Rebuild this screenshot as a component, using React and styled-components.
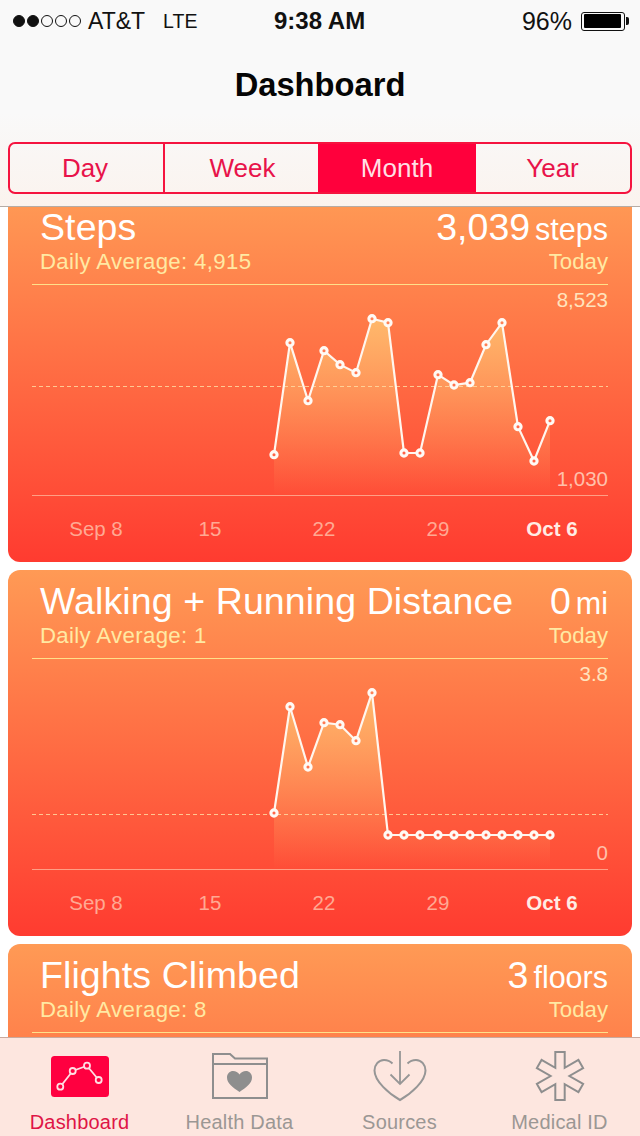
import React from "react";
import styled, { createGlobalStyle } from "styled-components";

const GlobalStyle = createGlobalStyle`
  html, body {
    margin: 0;
    padding: 0;
    background: #fff;
    font-family: "Liberation Sans", Arial, sans-serif;
  }
`;

const xs = [242, 258, 276, 292, 308, 324, 340, 356, 372, 388, 406, 422, 438, 454, 470, 486, 502, 518];

const cards = [
  {
    id: "steps",
    title: "Steps",
    value: "3,039",
    unit: "steps",
    average: "Daily Average: 4,915",
    max: "8,523",
    min: "1,030",
    mid: 101,
    ys: [169.7, 57.7, 115.7, 65.7, 79.7, 87.7, 33.7, 37.7, 168, 168, 89.7, 100, 97.7, 59.7, 37.7, 141.7, 176, 135.7],
  },
  {
    id: "distance",
    title: "Walking + Running Distance",
    value: "0",
    unit: "mi",
    average: "Daily Average: 1",
    max: "3.8",
    min: "0",
    mid: 155,
    ys: [154, 47.7, 108, 63.7, 65.7, 81.7, 33.7, 176, 176, 176, 176, 176, 176, 176, 176, 176, 176, 176],
  },
  {
    id: "flights",
    title: "Flights Climbed",
    value: "3",
    unit: "floors",
    average: "Daily Average: 8",
  },
];

const dates = ["Sep 8", "15", "22", "29", "Oct 6"];

const tabs = [
  { label: "Dashboard", Icon: DashboardIcon, active: true },
  { label: "Health Data", Icon: FolderIcon },
  { label: "Sources", Icon: SourcesIcon },
  { label: "Medical ID", Icon: StarOfLifeIcon },
];

function DashboardIcon() {
  const pts = [[9.3, 30.7], [21.7, 15], [36, 9.7], [47.7, 24]];
  return (
    <svg width="58" height="41" viewBox="0 0 58 41">
      <rect width="58" height="41" rx="3.5" fill="#ff0040" />
      <polyline points={pts.map((p) => p.join(",")).join(" ")} fill="none" stroke="#ffdfe3" strokeWidth="1.8" />
      {pts.map((p) => (
        <circle key={p[0]} cx={p[0]} cy={p[1]} r="3" fill="#ff0040" stroke="#ffdfe3" strokeWidth="1.8" />
      ))}
    </svg>
  );
}

function FolderIcon() {
  return (
    <svg width="56" height="46" viewBox="0 0 56 46">
      <path
        d="M1 45V1H18L23 5.6H55V45ZM1 11H55"
        fill="none"
        stroke="#8e8e8e"
        strokeWidth="2"
      />
      <path
        d="M27.5 39C21 34.5 15 30.5 15 24.5C15 20.5 18 18 21 18C23.8 18 26 19.3 27.5 21.5C29 19.3 31.2 18 34 18C37 18 40 20.5 40 24.5C40 30.5 34 34.5 27.5 39Z"
        fill="#8e8e8e"
      />
    </svg>
  );
}

function SourcesIcon() {
  return (
    <svg width="54" height="52" viewBox="0 0 54 52">
      <path
        d="M19.5 13.5C17 11 14 10 11 10C5.500 10 1.500 15 1.500 20.500C1.500 31 16 44 27 50C38 44 52.500 31 52.500 20.500C52.500 15 48.500 10 43 10C40 10 37 11 34.500 13.500"
        fill="none"
        stroke="#969696"
        strokeWidth="2"
      />
      <path d="M27 1V34M17.500 24.500L27 34L36.500 24.500" fill="none" stroke="#969696" strokeWidth="1.800" />
    </svg>
  );
}

function StarOfLifeIcon() {
  // outline of six arms around the centre
  const w = 4.7;
  const len = 24;
  const at = (x, y, deg) => {
    const r = (deg * Math.PI) / 180;
    return [x * Math.cos(r) - y * Math.sin(r), x * Math.sin(r) + y * Math.cos(r)];
  };
  const points = [];
  for (let deg = 0; deg < 360; deg += 60) {
    points.push(at(-w, -len, deg), at(w, -len, deg), at(0, -2 * w, deg + 30));
  }
  return (
    <svg width="52" height="52" viewBox="-26 -26 52 52">
      <polygon
        points={points.map((p) => p.map((n) => n.toFixed(2)).join(",")).join(" ")}
        fill="none"
        stroke="#8e8e8e"
        strokeWidth="2"
      />
    </svg>
  );
}

function Chart({ id, ys, mid }) {
  const pts = ys.map((y, i) => [xs[i], y]);
  const line = pts.map((p) => p.join(",")).join(" ");
  const area = `${xs[0]},210 ${line} ${xs[xs.length - 1]},210`;
  return (
    <svg width="576" height="210" viewBox="0 0 576 210">
      <defs>
        <linearGradient id={`${id}-area`} gradientUnits="userSpaceOnUse" x1="0" y1="30" x2="0" y2="210">
          <stop offset="0" stopColor="#ffd27a" stopOpacity="0.72" />
          <stop offset="1" stopColor="#ffd27a" stopOpacity="0" />
        </linearGradient>
        <linearGradient id={`${id}-hole`} gradientUnits="userSpaceOnUse" x1="0" y1="0" x2="0" y2="210">
          <stop offset="0" stopColor="#ff8a5a" />
          <stop offset="1" stopColor="#ff5a42" />
        </linearGradient>
      </defs>
      <polygon points={area} fill={`url(#${id}-area)`} />
      <line x1="0" y1={mid + 0.5} x2="576" y2={mid + 0.5} stroke="#ffd9a0" strokeOpacity="0.85" strokeWidth="1" strokeDasharray="4 3" />
      <polyline points={line} fill="none" stroke="#fff6ee" strokeWidth="2.2" />
      {pts.map((p) => (
        <circle key={p[0]} cx={p[0]} cy={p[1]} r="3.1" fill={`url(#${id}-hole)`} stroke="#fffaf5" strokeWidth="3.1" />
      ))}
    </svg>
  );
}

function MetricCard({ card }) {
  return (
    <Card>
      <CardHead>
        <HeadRow>
          <Title>{card.title}</Title>
          <Reading>
            {card.value}
            <Unit>{card.unit}</Unit>
          </Reading>
        </HeadRow>
        <SubRow>
          <Average>{card.average}</Average>
          <span>Today</span>
        </SubRow>
      </CardHead>
      {card.ys && (
        <>
          <ChartArea>
            <Chart id={card.id} ys={card.ys} mid={card.mid} />
            <MaxLabel>{card.max}</MaxLabel>
            <MinLabel>{card.min}</MinLabel>
          </ChartArea>
          <AxisRow>
            {dates.map((d) => (
              <AxisLabel key={d} $current={d === "Oct 6"}>
                {d}
              </AxisLabel>
            ))}
          </AxisRow>
        </>
      )}
    </Card>
  );
}

export default function App() {
  return (
    <Screen>
      <GlobalStyle />
      <Header>
        <StatusBar>
          <Signal>
            {[1, 1, 0, 0, 0].map((on, i) => (
              <Dot key={i} $on={on} />
            ))}
          </Signal>
          <Carrier>AT&amp;T</Carrier>
          <Network>LTE</Network>
          <Clock>9:38 AM</Clock>
          <BatteryText>96%</BatteryText>
          <Battery>
            <BatteryFill />
          </Battery>
        </StatusBar>
        <NavTitle>Dashboard</NavTitle>
        <SegmentWrap>
          <Segments>
            <Segment $divider>Day</Segment>
            <Segment>Week</Segment>
            <Segment $active>Month</Segment>
            <Segment>Year</Segment>
          </Segments>
        </SegmentWrap>
      </Header>
      <Feed>
        <CardList>
          {cards.map((c) => (
            <MetricCard key={c.id} card={c} />
          ))}
        </CardList>
      </Feed>
      <TabBar>
        {tabs.map(({ label, Icon, active }) => (
          <Tab key={label}>
            <IconSlot>
              <Icon />
            </IconSlot>
            <TabLabel $active={active}>{label}</TabLabel>
          </Tab>
        ))}
      </TabBar>
    </Screen>
  );
}

const Screen = styled.div`
  width: 640px;
  height: 1136px;
  display: flex;
  flex-direction: column;
  overflow: hidden;
  background: #fff;
`;

const Header = styled.header`
  flex: none;
  height: 207px;
  box-sizing: border-box;
  background: linear-gradient(#f9f9f9 0%, #f9f9f9 55%, #fbf3ee 100%);
  border-bottom: 1px solid #b5aca6;
  position: relative;
  z-index: 1;
`;

const StatusBar = styled.div`
  height: 42px;
  display: flex;
  align-items: center;
  padding: 0 12px 0 13px;
  color: #111;
  position: relative;
`;

const Signal = styled.div`
  display: flex;
  gap: 2px;
  margin-right: 7px;
`;

const Dot = styled.span`
  width: 12px;
  height: 12px;
  box-sizing: border-box;
  border-radius: 50%;
  border: 1px solid #111;
  background: ${(p) => (p.$on ? "#111" : "transparent")};
`;

const Carrier = styled.span`
  font-size: 23px;
`;

const Network = styled.span`
  font-size: 19.5px;
  margin-left: 18px;
`;

const Clock = styled.span`
  position: absolute;
  left: 274px;
  font-size: 24px;
  font-weight: 700;
`;

const BatteryText = styled.span`
  font-size: 25px;
  margin-left: auto;
  margin-right: 9px;
`;

const Battery = styled.span`
  width: 44px;
  height: 19px;
  box-sizing: border-box;
  border: 1.5px solid #111;
  border-radius: 3px;
  padding: 1.5px;
  margin-right: 3px;
  position: relative;
  &::after {
    content: "";
    position: absolute;
    right: -5px;
    top: 4px;
    width: 3px;
    height: 8px;
    background: #111;
    border-radius: 0 2px 2px 0;
  }
`;

const BatteryFill = styled.span`
  display: block;
  width: 96%;
  height: 100%;
  background: #000;
  border-radius: 1px;
`;

const NavTitle = styled.h1`
  margin: 0;
  height: 86px;
  line-height: 86px;
  text-align: center;
  font-size: 32.7px;
  font-weight: 700;
  color: #050505;
`;

const SegmentWrap = styled.div`
  padding: 14px 8px 0;
`;

const Segments = styled.div`
  height: 52px;
  box-sizing: border-box;
  border: 2px solid #f5143f;
  border-radius: 7px;
  display: grid;
  grid-template-columns: repeat(4, 1fr);
  overflow: hidden;
`;

const Segment = styled.div`
  display: flex;
  align-items: center;
  justify-content: center;
  font-size: 26px;
  color: ${(p) => (p.$active ? "#ffdfe4" : "#e8134a")};
  background: ${(p) => (p.$active ? "#ff003c" : "transparent")};
  border-right: ${(p) => (p.$divider ? "2px solid #f5143f" : "none")};
  margin: ${(p) => (p.$active ? "0 -1px 0 -2px" : "0")};
  padding-right: ${(p) => (p.$divider ? "3px" : "0")};
`;

const Feed = styled.main`
  flex: 1;
  min-height: 0;
  overflow: hidden;
`;

const CardList = styled.div`
  margin-top: -11px;
  padding: 0 8px;
  display: flex;
  flex-direction: column;
  gap: 8px;
`;

const Card = styled.section`
  flex: none;
  height: 366px;
  box-sizing: border-box;
  padding: 0 24px;
  border-radius: 12px;
  color: #fff;
  background: linear-gradient(#ff9a55, #ff3b30);
`;

const CardHead = styled.div`
  height: 89px;
  box-sizing: border-box;
  padding-top: 11px;
  border-bottom: 1px solid #ffe08a;
`;

const HeadRow = styled.div`
  display: flex;
  justify-content: space-between;
  align-items: baseline;
  height: 40px;
  line-height: 40px;
`;

const Title = styled.h2`
  margin: 0;
  padding-left: 8px;
  font-size: 37.5px;
  font-weight: 400;
  letter-spacing: 0.1px;
`;

const Reading = styled.div`
  font-size: 37.5px;
`;

const Unit = styled.span`
  font-size: 30.5px;
  margin-left: 5px;
`;

const SubRow = styled.div`
  display: flex;
  justify-content: space-between;
  margin-top: 2px;
  padding-left: 8px;
  height: 26px;
  line-height: 26px;
  font-size: 22.2px;
  color: #ffe9a3;
`;

const Average = styled.span`
  letter-spacing: 0.35px;
`;

const ChartArea = styled.div`
  height: 211px;
  box-sizing: border-box;
  position: relative;
  border-bottom: 1px solid rgba(255, 215, 185, 0.6);

  svg {
    display: block;
  }
`;

const MaxLabel = styled.span`
  position: absolute;
  right: 0;
  top: 3px;
  line-height: 24px;
  font-size: 20.5px;
  color: #ffe3bd;
`;

const MinLabel = styled.span`
  position: absolute;
  right: 0;
  top: 182px;
  line-height: 24px;
  font-size: 20.5px;
  color: #ffc0ab;
`;

const AxisRow = styled.div`
  display: grid;
  grid-template-columns: repeat(5, 114px);
  margin-left: 7px;
  height: 66px;
  align-items: center;
`;

const AxisLabel = styled.span`
  text-align: center;
  font-size: 20.5px;
  font-weight: ${(p) => (p.$current ? 700 : 400)};
  color: ${(p) => (p.$current ? "#ffece4" : "#ffa993")};
`;

const TabBar = styled.nav`
  flex: none;
  height: 99px;
  box-sizing: border-box;
  display: grid;
  grid-template-columns: repeat(4, 160px);
  padding-top: 12px;
  background: #fde6df;
  border-top: 1px solid #c9a99e;
  position: relative;
  z-index: 1;
`;

const Tab = styled.div`
  display: flex;
  flex-direction: column;
  align-items: center;
  padding-right: 1px;
`;

const IconSlot = styled.div`
  height: 52px;
  display: flex;
  align-items: center;
  justify-content: center;
`;

const TabLabel = styled.span`
  margin-top: 8px;
  line-height: 24px;
  font-size: 20px;
  letter-spacing: 0.2px;
  color: ${(p) => (p.$active ? "#df1546" : "#9b9794")};
`;
